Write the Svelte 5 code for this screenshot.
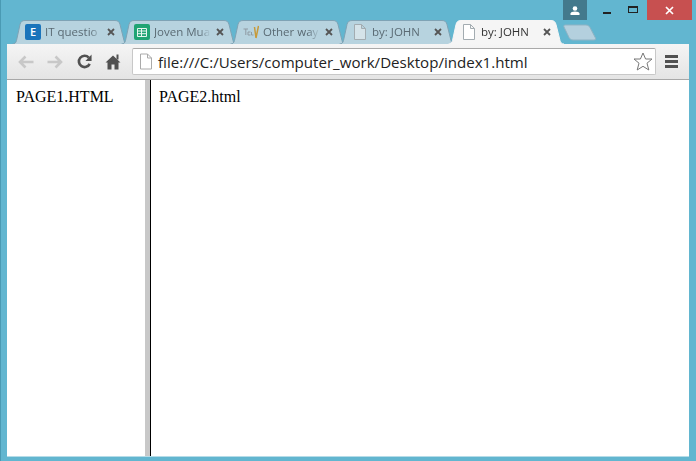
<script>
  const tabs = [
    { title: "IT questio", icon: "e" },
    { title: "Joven Mua", icon: "sheet" },
    { title: "Other way", icon: "tech" },
    { title: "by: JOHN", icon: "page" },
    { title: "by: JOHN", icon: "page", active: true }
  ];
</script>

<div class="window">
  <div class="strip">
    <div class="tabs">
      {#each tabs as tab}
        <div class="tab" class:active={tab.active}>
          <svg class="shape" width="118" height="24" viewBox="0 0 118 24">
            <path d="M0.500 24C3 24 4 22.500 4.500 20.500L8 4.500C8.700 1.800 10 0.500 13 0.500H103C106 0.500 107.300 1.800 108 4.500L112 20.500C112.500 22.500 113.500 24 116 24" />
          </svg>
          {#if tab.icon === "e"}
            <span class="fav-e">E</span>
          {:else if tab.icon === "sheet"}
            <svg class="fav" width="16" height="16" viewBox="0 0 16 16">
              <rect width="16" height="16" rx="2" fill="#20a474" />
              <path d="M3.500 4.500H12.500V12.500H3.500ZM3.500 7H12.500M3.500 9.700H12.500M7.500 4.500V12.500" fill="none" stroke="#e8f6f0" stroke-width="1" />
            </svg>
          {:else if tab.icon === "tech"}
            <svg class="fav" width="16" height="16" viewBox="0 0 16 16">
              <path d="M0.500 5H5M2.800 5V11M5 8H7.500M5 8V11H7.500M8.500 8V11H10.500" fill="none" stroke="#8f9ba3" stroke-width="1" />
              <path d="M11.500 3L13 14M15.500 2L13 14" fill="none" stroke="#c79a3a" stroke-width="1.500" />
            </svg>
          {:else}
            <svg class="fav" width="16" height="16" viewBox="0 0 16 16">
              <path d="M2.500 0.500H9.500L13.500 4.500V15.500H2.500ZM9.500 0.500V4.500H13.500" fill={tab.active ? "#fff" : "#d5e3e9"} stroke="#a3acb1" />
            </svg>
          {/if}
          <span class="title">{tab.title}</span>
          <svg class="close" width="8" height="8" viewBox="0 0 8 8">
            <path d="M1 1L7 7M7 1L1 7" stroke="#555" stroke-width="1.800" />
          </svg>
        </div>
      {/each}
      <svg class="newtab" width="34" height="17" viewBox="0 0 34 17">
        <path d="M2 1H23C25 1 26 2 27 3.500L32.500 14C33 15 32.500 16 31 16H10C8 16 7 15 6 13.500L1 3C0.500 2 1 1 2 1Z" fill="#b4d0de" stroke="#8fb3c4" />
      </svg>
    </div>
    <div class="controls">
      <div class="avatar">
        <svg width="10" height="9" viewBox="0 0 10 9">
          <circle cx="5" cy="2.500" r="2.300" fill="#fff" />
          <path d="M0.500 9V7.500C0.500 6.300 2.500 5.500 5 5.500C7.500 5.500 9.500 6.300 9.500 7.500V9Z" fill="#fff" />
        </svg>
      </div>
      <div class="btn"><span class="min"></span></div>
      <div class="btn"><span class="max"></span></div>
      <div class="btn-close">
        <svg width="9" height="9" viewBox="0 0 9 9">
          <path d="M1 1L8 8M8 1L1 8" stroke="#fff" stroke-width="1.700" />
        </svg>
      </div>
    </div>
  </div>

  <div class="chrome">
    <div class="toolbar">
      <svg width="18" height="16" viewBox="0 0 18 16">
        <path d="M16.500 8H3M8.500 2.500L3 8L8.500 13.500" fill="none" stroke="#c8c8c8" stroke-width="2.600" />
      </svg>
      <svg class="nav-fwd" width="18" height="16" viewBox="0 0 18 16">
        <path d="M1.500 8H15M9.500 2.500L15 8L9.500 13.500" fill="none" stroke="#c8c8c8" stroke-width="2.600" />
      </svg>
      <svg class="nav-reload" width="17" height="17" viewBox="0 0 18 18">
        <path d="M14.500 11.500A6 6 0 1 1 13.500 4.800" fill="none" stroke="#515151" stroke-width="2.800" />
        <path d="M16.500 1.500V8.500H10Z" fill="#515151" />
      </svg>
      <svg class="nav-home" width="16" height="16" viewBox="0 0 16 16">
        <path d="M8 1.500L15.500 8.500H13.500V15.500H9.500V10.500H6.500V15.500H2.500V8.500H0.500Z" fill="#515151" />
        <rect x="11.500" y="0.500" width="2" height="5" fill="#515151" />
      </svg>
      <div class="omnibox">
        <svg width="14" height="17" viewBox="0 0 14 17">
          <path d="M1.500 1H8.500L12.500 5V16H1.500ZM8.500 1V5H12.500" fill="#fff" stroke="#aaa" />
        </svg>
        <span class="url">file:///C:/Users/computer_work/Desktop/index1.html</span>
        <svg class="star" width="20" height="19" viewBox="0 0 20 19">
          <path d="M10 1L12.600 7H19L14 11.200L15.800 18L10 14.300L4.200 18L6 11.200L1 7H7.400Z" fill="#fff" stroke="#777" />
        </svg>
      </div>
      <div class="menu"><span></span><span></span><span></span></div>
    </div>
    <div class="frames">
      <div class="frame left">PAGE1.HTML</div>
      <div class="divider"></div>
      <div class="frame">PAGE2.html</div>
    </div>
  </div>
</div>

<style>
  :global(body) { margin: 0; background: #62b6d0; }
  .window {
    width: 696px;
    height: 461px;
    box-sizing: border-box;
    display: flex;
    flex-direction: column;
    overflow: hidden;
    background: #62b6d0;
    border-left: 1px solid #4a9ab3;
    padding: 0 7px 4px 6px;
    font-family: "Open Sans", "Noto Sans", sans-serif;
  }
  .strip { height: 44px; flex: none; display: flex; margin: 0 -3px 0 -2px; }
  .tabs { flex: 1 1 0; min-width: 0; display: flex; align-items: flex-start; padding: 20px 0 0 7px; }
  .tab {
    position: relative;
    flex: none;
    width: 118px;
    height: 24px;
    margin-right: -9px;
    box-sizing: border-box;
    padding: 4px 0 0 13px;
    display: flex;
    align-items: flex-start;
    font-size: 11.500px;
    line-height: 16px;
    color: #5a6a73;
  }
  .shape { position: absolute; left: 0; top: 0; }
  .shape path { fill: #b7d3df; stroke: #7fa3b5; }
  .tab.active { z-index: 1; color: #333; }
  .tab.active .shape path { fill: #f5f5f5; stroke: #f5f5f5; }
  .fav, .fav-e, .title, .close { position: relative; flex: none; }
  .fav-e {
    width: 16px;
    height: 16px;
    border-radius: 2px;
    background: #1a74bb;
    color: #fff;
    font-size: 11px;
    font-weight: 600;
    text-align: center;
  }
  .title {
    margin-left: 4px;
    width: 58px;
    white-space: nowrap;
    -webkit-mask-image: linear-gradient(90deg, #000 78%, transparent 98%);
    mask-image: linear-gradient(90deg, #000 78%, transparent 98%);
  }
  .close { margin: 4px 0 0 4px; }
  .newtab { margin: 4px 0 0 6px; flex: none; }
  .controls { flex: none; width: 129px; display: flex; height: 20px; position: relative; }
  .avatar {
    width: 24px;
    margin-right: 7px;
    background: #43798c;
    display: flex;
    align-items: center;
    justify-content: center;
  }
  .btn { width: 26px; display: flex; align-items: center; justify-content: center; }
  .min { width: 8px; height: 2px; margin-top: 6px; background: #222; }
  .max { width: 8px; height: 4px; border: 1px solid #222; border-top-width: 2px; margin-bottom: 1px; }
  .btn-close {
    width: 45px;
    margin-left: 1px;
    background: #c75050;
    display: flex;
    align-items: center;
    justify-content: center;
  }
  .chrome {
    flex: 1;
    display: flex;
    flex-direction: column;
    min-height: 0;
    background: #fff;
    border-bottom: 1px solid #b5dce8;
    border-radius: 2px 2px 0 0;
  }
  .toolbar {
    height: 36px;
    flex: none;
    box-sizing: border-box;
    border-bottom: 1px solid #a8a8a8;
    background: linear-gradient(#f5f5f5, #e4e4e4);
    display: flex;
    align-items: center;
    padding: 0 11px 0 10px;
    gap: 9px;
  }
  .nav-fwd { margin-left: 2px; }
  .nav-reload { margin-left: 3px; }
  .nav-home { margin-left: 3px; }
  .omnibox {
    flex: 1;
    height: 27px;
    margin-left: 2px;
    box-sizing: border-box;
    border: 1px solid #c8c8c8;
    border-top-color: #a9a9a9;
    border-radius: 2px;
    background: #fff;
    display: flex;
    align-items: center;
    padding: 0 2px 0 6px;
    gap: 5px;
  }
  .url { font-size: 15.100px; color: #222; white-space: nowrap; flex: 1; }
  .menu { width: 13px; display: flex; flex-direction: column; gap: 2px; }
  .menu span { height: 3px; background: #515151; }
  .frames {
    flex: 1;
    display: flex;
    min-height: 0;
    font-family: "Liberation Serif", serif;
    font-size: 16px;
    line-height: 18px;
    color: #000;
  }
  .frame { flex: 1; padding: 8px; }
  .left { flex: none; width: 138px; box-sizing: border-box; padding-left: 9px; }
  .divider {
    width: 5px;
    flex: none;
    background: #c8c8c8;
    border-right: 1px solid #000;
  }
</style>
